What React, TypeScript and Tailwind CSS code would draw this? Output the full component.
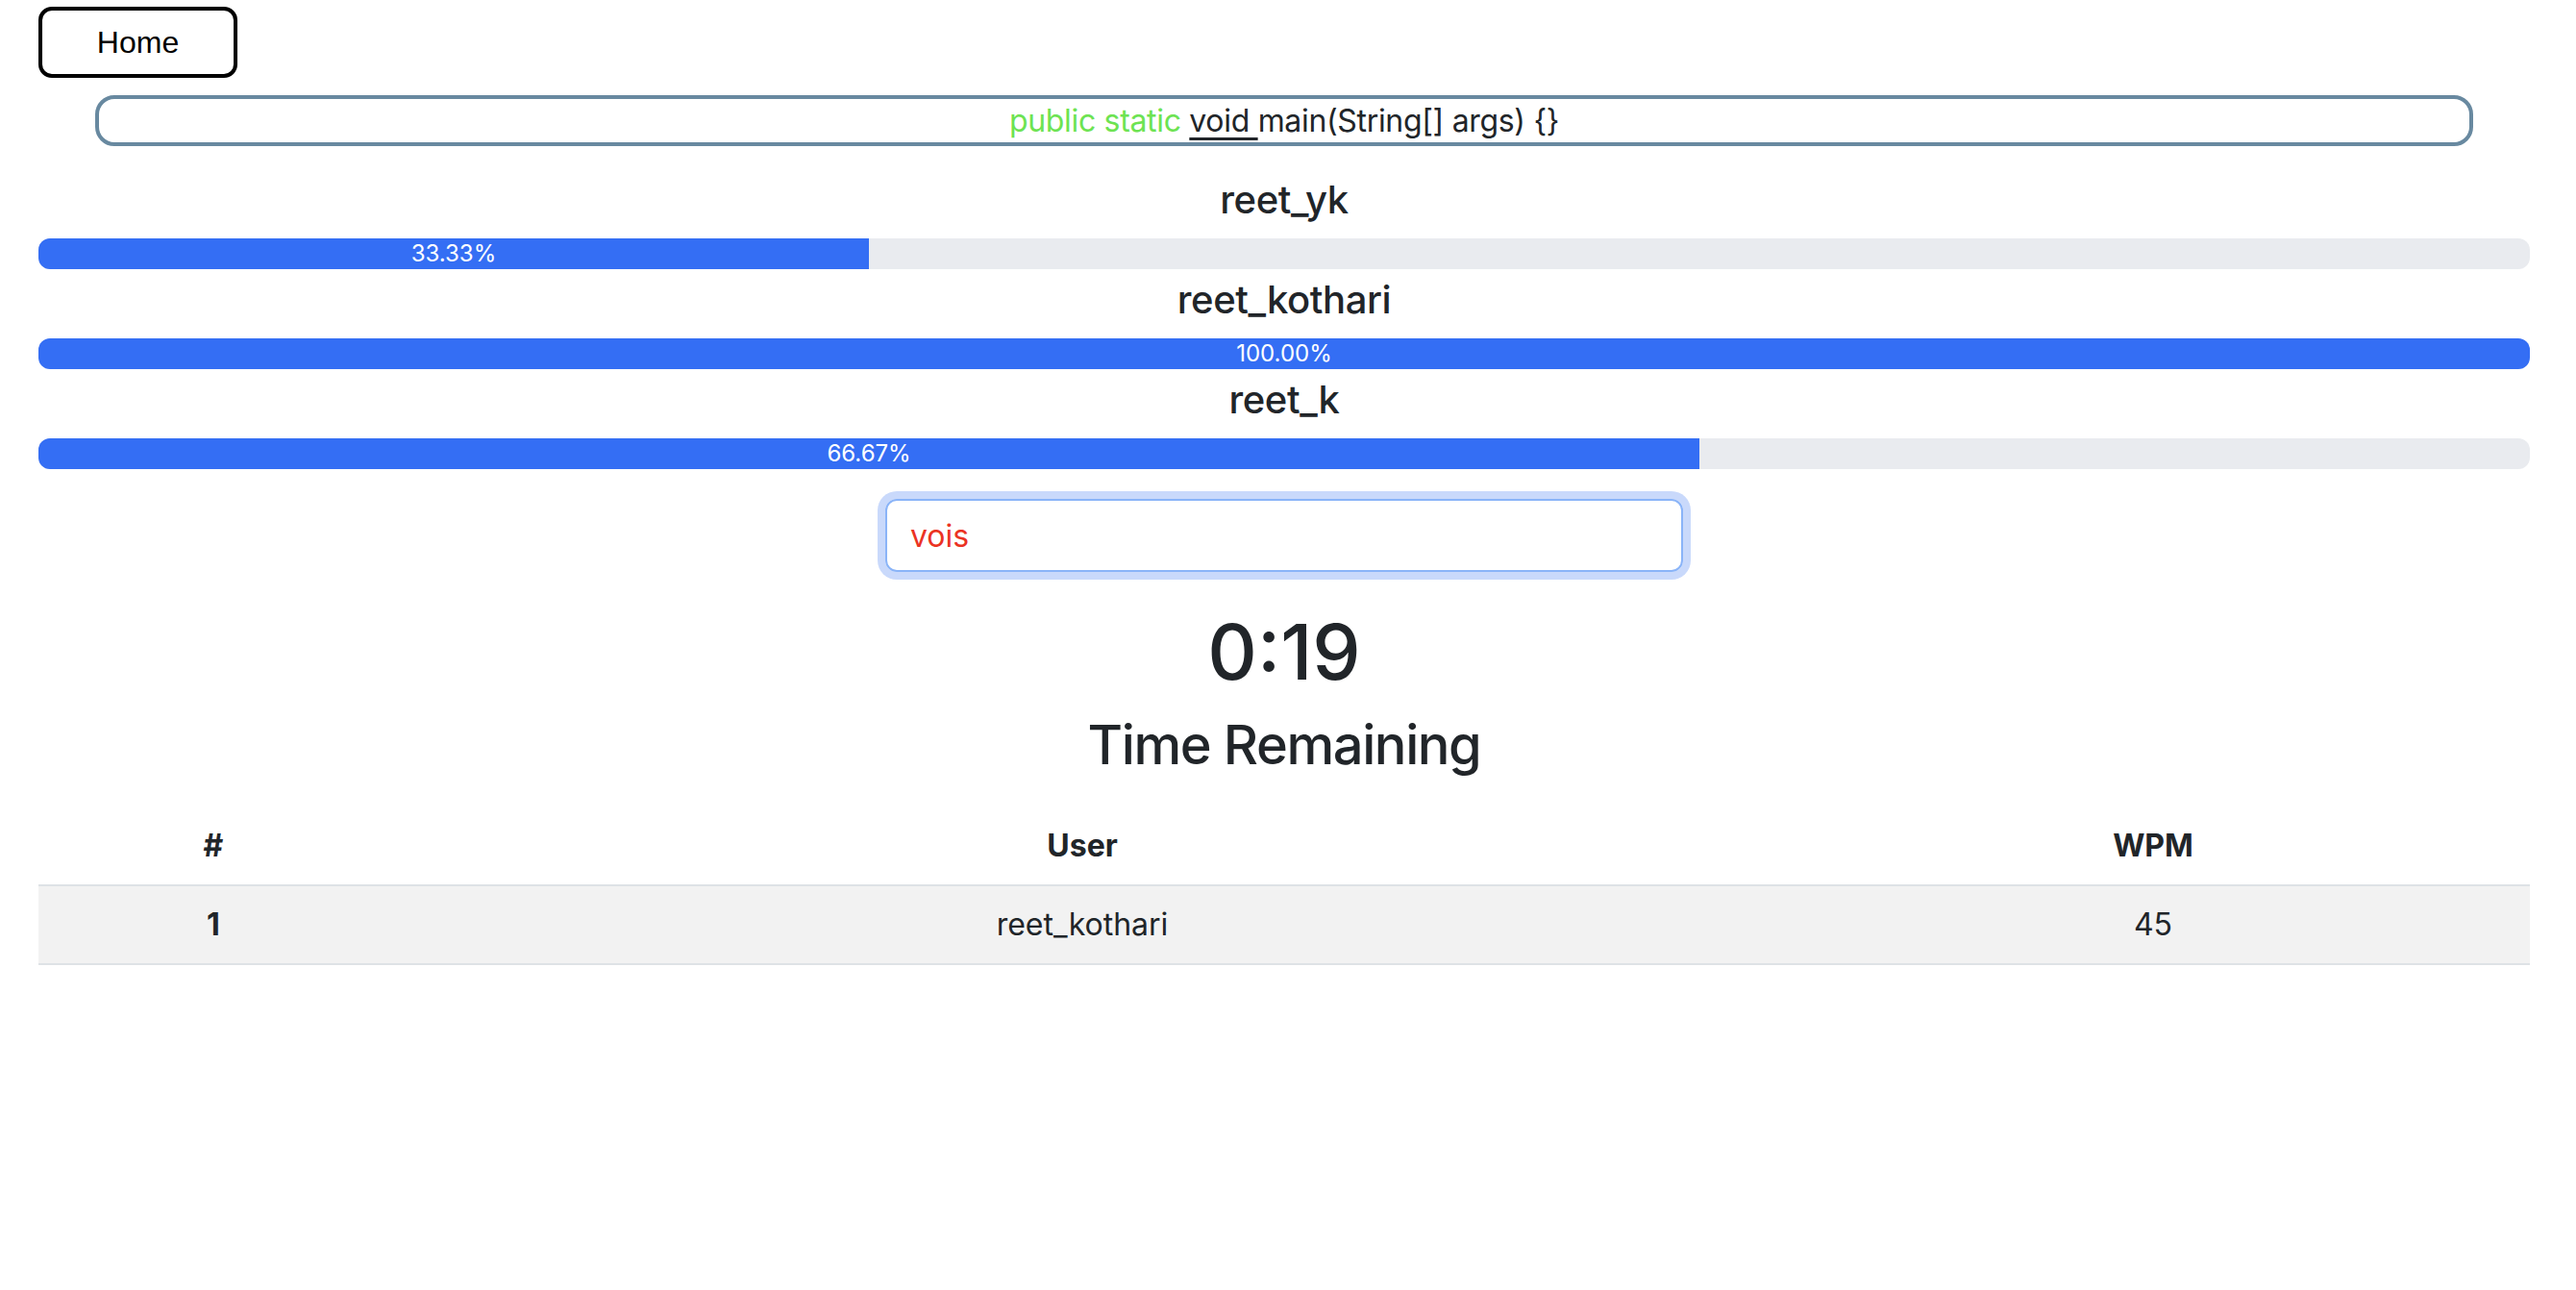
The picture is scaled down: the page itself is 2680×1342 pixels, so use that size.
const players = [
  { name: "reet_yk", progress: 33.33 },
  { name: "reet_kothari", progress: 100 },
  { name: "reet_k", progress: 66.67 },
];

const results = [{ rank: 1, user: "reet_kothari", wpm: 45 }];

function PlayerProgress({ name, progress }: { name: string; progress: number }) {
  return (
    <div className="mb-[8px]">
      <h5 className="mb-[16px] text-center text-[40px] leading-[48px] font-medium tracking-[-0.01em] text-[#212529]">
        {name}
      </h5>
      <div className="flex h-[32px] overflow-hidden rounded-[12px] bg-[#e9ebef]">
        <div
          className="flex items-center justify-center bg-[#346ef4] text-[24px] leading-[32px] text-white"
          style={{ width: `${progress}%` }}
        >
          {progress.toFixed(2)}%
        </div>
      </div>
    </div>
  );
}

export default function App() {
  return (
    <div
      className="min-h-screen bg-white pl-[40px] pr-[48px] text-[#212529]"
      style={{ fontFamily: "Inter, 'Noto Sans', sans-serif" }}
    >
      <button
        type="button"
        className="mt-[7px] h-[74px] w-[207px] rounded-[14px] border-[4px] border-black bg-white text-[32px] text-black"
        style={{ fontFamily: "'Liberation Sans', Arial, sans-serif" }}
      >
        Home
      </button>

      <div className="mx-[59px] mt-[18px] h-[53px] rounded-[20px] border-[4px] border-[#6889a0] text-center text-[32px] leading-[45px] tracking-[-0.01em] whitespace-pre">
        <span className="text-[#6de352]">public static </span>
        <span className="underline decoration-[3px] underline-offset-[6px]">void </span>
        <span>main(String[] args) {"{}"}</span>
      </div>

      <div className="mt-[32px]">
        {players.map((p) => (
          <PlayerProgress key={p.name} name={p.name} progress={p.progress} />
        ))}
      </div>

      <div className="mt-[31px] flex justify-center">
        <input
          readOnly
          value="vois"
          className="h-[76px] w-[830px] rounded-[12px] border-[2px] border-[#8ab4f8] px-[24px] text-[32px] text-[#eb3323] shadow-[0_0_0_8px_#c9d9fb] outline-none"
        />
      </div>

      <h1 className="mt-[35px] text-center text-[80px] leading-[96px] font-medium">0:19</h1>
      <h2 className="mt-[11px] text-center text-[56px] leading-[77px] font-medium tracking-[-0.025em]">
        Time Remaining
      </h2>

      <table className="mt-[26px] w-full table-fixed border-collapse text-center text-[32px] leading-[48px]">
        <colgroup>
          <col className="w-[364px]" />
          <col className="w-[1444px]" />
          <col className="w-[784px]" />
        </colgroup>
        <thead>
          <tr className="border-b-[2px] border-[#dee2e6]">
            <th className="py-[16px] font-bold">#</th>
            <th className="py-[16px] font-bold">User</th>
            <th className="py-[16px] font-bold">WPM</th>
          </tr>
        </thead>
        <tbody>
          {results.map((r) => (
            <tr key={r.rank} className="border-b-[2px] border-[#dee2e6] bg-[#f2f2f2]">
              <th className="py-[16px] font-bold">{r.rank}</th>
              <td className="py-[16px]">{r.user}</td>
              <td className="py-[16px]">{r.wpm}</td>
            </tr>
          ))}
        </tbody>
      </table>
    </div>
  );
}
